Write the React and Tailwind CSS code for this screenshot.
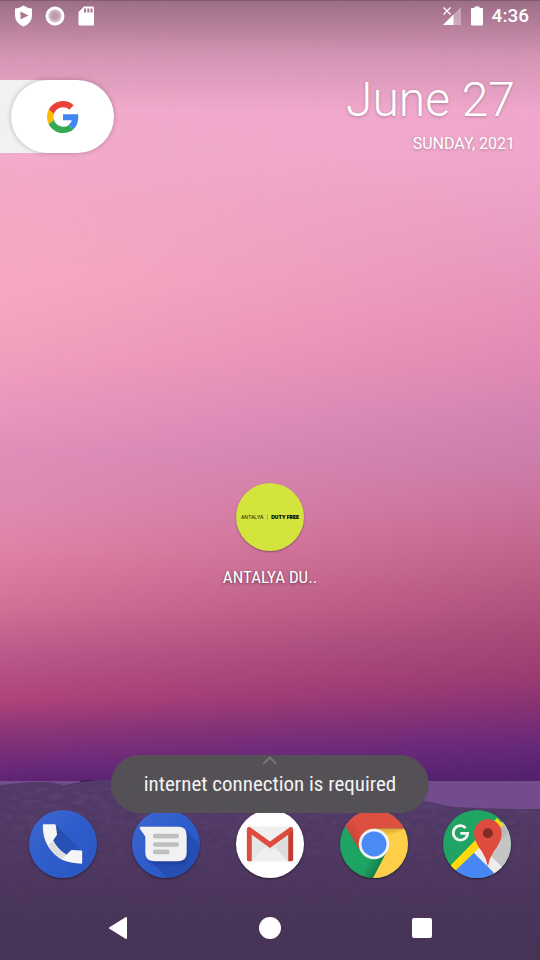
import React from "react";

function Wallpaper() {
  return (
    <div aria-hidden="true" className="absolute inset-0 -z-10 overflow-hidden bg-[#4c3560]">
      <div className="absolute inset-0 bg-[linear-gradient(to_bottom,#f0a8ce_0%,#f0a7cc_16%,#ea9cc2_25%,#e890b9_33%,#e089b3_38.500%,#d484b2_43%,#cd7daa_48%,#ca719b_53%,#bd6089_59%,#a94b79_65.500%,#9a3c70_70.500%,#8b3374_73%,#65287a_78%,#52216d_81.300%,#52216d_100%)]" />
      <div className="absolute inset-0 bg-[linear-gradient(to_bottom,#f0a8ce_0%,#f1abcb_16%,#f4a8c4_21%,#f8a9c1_29%,#f29fbd_37%,#e995be_43%,#df8eb8_47.500%,#df8ab2_53%,#df82a6_57.500%,#d07096_63.500%,#b95a8a_68%,#b04479_72.800%,#8d3678_76%,#66287a_80.400%,#5f2372_81.300%,#5f2372_100%)] [mask-image:linear-gradient(to_right,black,transparent)]" />
      <svg className="absolute inset-x-0 bottom-0 h-[180px] w-full" viewBox="0 0 540 180" preserveAspectRatio="none">
        <defs>
          <linearGradient id="hill" x1="0" y1="0" x2="0" y2="1">
            <stop offset="0" stopColor="#533a6a" />
            <stop offset="0.45" stopColor="#4e3761" />
            <stop offset="1" stopColor="#463355" />
          </linearGradient>
          <filter id="grain" x="0" y="0" width="100%" height="100%">
            <feTurbulence type="fractalNoise" baseFrequency="0.08 0.2" numOctaves="3" seed="4" />
            <feColorMatrix values="0 0 0 0 0.7  0 0 0 0 0.5  0 0 0 0 0.8  0.3 0 0 0 -0.12" />
          </filter>
          <linearGradient id="fade" x1="0" y1="0" x2="0" y2="1">
            <stop offset="0" stopColor="white" stopOpacity="0.6" />
            <stop offset="0.6" stopColor="white" stopOpacity="0.1" />
            <stop offset="1" stopColor="white" stopOpacity="0" />
          </linearGradient>
          <mask id="grainMask"><path d="M0 8H300L430 24L540 31V180H0z" fill="url(#fade)" /></mask>
        </defs>
        <path d="M0 1H540V40H0z" fill="#724c8c" />
        <path d="M80 1L112-2H150V6H80z" fill="#321250" />
        <path d="M0 5L30 2H50L64 5L80 2L125-3L180-10L220-4L300 8L400 18L430 22L453 27L510 29H540V180H0z" fill="url(#hill)" />
        <g mask="url(#grainMask)"><rect y="8" width="540" height="172" filter="url(#grain)" /></g>
      </svg>
      <div className="absolute inset-x-0 top-0 h-28 bg-linear-to-b from-black/35 via-black/12 to-transparent" />
      <div className="absolute inset-x-0 top-0 h-px bg-black/15" />
    </div>
  );
}

function StatusBar() {
  return (
    <header className="flex h-8 items-center justify-between pr-[11px] pl-[14px] text-white">
      <div className="flex items-center gap-3">
        <svg width="19" height="22" viewBox="0 0 19 22" aria-label="Play Protect">
          <path fillRule="evenodd" fill="currentColor" d="M9.500 0.500Q13 3 18 3.500V10.500Q18 18 9.500 21.500Q1 18 1 10.500V3.500Q6 3 9.500 0.500zM6.500 6.500V14.500L14.500 10.500z" />
        </svg>
        <svg width="20" height="20" viewBox="0 0 20 20" aria-label="Sync">
          <circle cx="10" cy="10" r="8" fill="currentColor" fillOpacity="0.45" stroke="currentColor" strokeWidth="3" />
          <circle cx="10" cy="10" r="4" fill="#bd90a8" fillOpacity="0.7" />
        </svg>
        <svg width="19" height="20" viewBox="0 0 19 20" aria-label="SD card">
          <path fillRule="evenodd" fill="currentColor" d="M7 0.500H15.500Q17 0.500 17 2V18Q17 19.500 15.500 19.500H3Q1.500 19.500 1.500 18V6zM7 2.500V6.500H9V2.500zM10.300 2.500V6.500H12.300V2.500zM13.500 2.500V6.500H15.500V2.500z" />
        </svg>
      </div>
      <div className="flex items-center gap-[7px]">
        <svg width="20" height="20" viewBox="0 0 20 20" aria-label="No mobile signal">
          <path d="M19 1V19H1z" fill="currentColor" fillOpacity="0.35" />
          <path d="M11.500 8.500V19H1z" fill="currentColor" />
          <path d="M1.500 1.500L8.500 8.500M8.500 1.500L1.500 8.500" stroke="currentColor" strokeWidth="1.300" />
        </svg>
        <svg width="16" height="20" viewBox="0 0 16 20" aria-label="Battery full">
          <path fill="currentColor" d="M5.500 0.500H10.500V2H13Q14 2 14 3V18.500Q14 19.500 13 19.500H3Q2 19.500 2 18.500V3Q2 2 3 2H5.500z" />
        </svg>
        <time className="text-[19px] leading-5 font-medium">4:36</time>
      </div>
    </header>
  );
}

function GoogleLogo() {
  return (
    <svg width="32" height="32" viewBox="0 0 48 48" aria-hidden="true">
      <path fill="#EA4335" d="M24 9.500c3.540 0 6.710 1.220 9.210 3.600l6.850-6.850C35.900 2.380 30.470 0 24 0 14.620 0 6.510 5.380 2.560 13.220l7.980 6.190C12.430 13.720 17.740 9.500 24 9.500z" />
      <path fill="#4285F4" d="M46.980 24.550c0-1.570-.15-3.090-.38-4.550H24v9.020h12.940c-.58 2.960-2.260 5.480-4.780 7.180l7.730 6c4.510-4.180 7.090-10.360 7.090-17.650z" />
      <path fill="#FBBC05" d="M10.530 28.590c-.48-1.450-.76-2.990-.76-4.590s.27-3.140.76-4.590l-7.980-6.190C.92 16.460 0 20.120 0 24c0 3.880.92 7.540 2.560 10.780l7.970-6.190z" />
      <path fill="#34A853" d="M24 48c6.480 0 11.930-2.130 15.890-5.810l-7.730-6c-2.150 1.450-4.920 2.300-8.160 2.300-6.260 0-11.570-4.220-13.470-9.910l-7.980 6.190C6.510 42.620 14.620 48 24 48z" />
    </svg>
  );
}

function PhoneIcon() {
  return (
    <svg className="size-full" viewBox="0 0 69 69" aria-hidden="true">
      <defs>
        <linearGradient id="blue" x1="0" y1="0" x2="1" y2="1">
          <stop offset="0" stopColor="#3f68cf" />
          <stop offset="0.500" stopColor="#2e5ccb" />
          <stop offset="1" stopColor="#2a57c0" />
        </linearGradient>
        <linearGradient id="shade" gradientUnits="userSpaceOnUse" x1="24" y1="24" x2="56" y2="56">
          <stop offset="0" stopColor="#14296b" stopOpacity="0.35" />
          <stop offset="1" stopColor="#14296b" stopOpacity="0.02" />
        </linearGradient>
        <clipPath id="disc"><circle cx="34.500" cy="34.500" r="34.500" /></clipPath>
      </defs>
      <g clipPath="url(#disc)">
        <rect width="69" height="69" fill="url(#blue)" />
        <path d="M28 16L68 56L56 70L33 49L24 31z" fill="url(#shade)" />
        <path d="M15 14.500H26Q27 14.500 27.200 15.500L28.500 25L24.500 31Q29 40 38 45.500L43 40.500L53 41.200Q54 41.300 54 42.300V53.500Q54 54.500 53 54.500C40 54 32 51 26 45C17 36 14 27 14 15.500Q14 14.500 15 14.500z" fill="#f5f5f5" />
        <path d="M19.500 35L24.500 31Q29 40 38 45.500L33.500 49.800Q29.500 48 26 45Q21.500 40.500 19.500 35z" fill="#dedede" />
      </g>
    </svg>
  );
}

function MessagesIcon() {
  return (
    <svg className="size-full" viewBox="0 0 69 69" aria-hidden="true">
      <defs>
        <filter id="soft" x="-30%" y="-30%" width="160%" height="170%"><feGaussianBlur stdDeviation="2" /></filter>
      </defs>
      <g clipPath="url(#disc)">
        <rect width="69" height="69" fill="url(#blue)" />
        <path d="M54 20L80 46V90H57L15 48z" fill="#14307d" fillOpacity="0.26" />
        <path d="M16 22H54V53H18z" fill="#0f2459" fillOpacity="0.5" filter="url(#soft)" />
        <path d="M8.500 17H47Q55.500 17 55.500 25.500V43.500Q55.500 52 47 52H22Q13.500 52 13.500 43.500V27L8 19Q7.500 17 8.500 17z" fill="#f1f1f1" />
        <path d="M23.500 26.500H45.500M23.500 35H45.500M23.500 42.500H36" stroke="#bfbfbf" strokeWidth="4.600" strokeLinecap="round" />
      </g>
    </svg>
  );
}

function GmailIcon() {
  return (
    <svg className="size-full" viewBox="0 0 69 69" aria-hidden="true">
      <circle cx="34.500" cy="34.500" r="34.500" fill="#fff" />
      <path d="M12 17H57V52H12z" fill="#e6e6e6" />
      <path d="M14 17H55L34.500 34z" fill="#f0f0f0" />
      <path d="M16 52L31 36L34.500 39L38 36L53 52z" fill="#efefef" />
      <path d="M16 26L34.500 42L53 26V52L38 37L34.500 41z" fill="#d8d8d8" fillOpacity="0.7" />
      <path d="M11 20L16 24V52H13Q11 52 11 50z" fill="#dc4c3f" />
      <path d="M58 20L53 24V52H56Q58 52 58 50z" fill="#c63a2e" />
      <path d="M11 20Q11 17 14 17.300L34.500 32L55 17.300Q58 17 58 20Q58 21.500 56.500 22.500L34.500 38.500L12.500 22.500Q11 21.500 11 20z" fill="#dd4b3e" />
    </svg>
  );
}

function ChromeIcon() {
  return (
    <svg className="size-full" viewBox="0 0 69 69" aria-hidden="true">
      <defs>
        <linearGradient id="redShade" gradientUnits="userSpaceOnUse" x1="10" y1="31" x2="22" y2="24">
          <stop offset="0" stopColor="#942c22" stopOpacity="0.35" />
          <stop offset="1" stopColor="#942c22" stopOpacity="0" />
        </linearGradient>
        <linearGradient id="yellowShade" x1="0" y1="0" x2="0" y2="1">
          <stop offset="0" stopColor="#a8751a" stopOpacity="0.4" />
          <stop offset="1" stopColor="#a8751a" stopOpacity="0" />
        </linearGradient>
        <linearGradient id="greenShade" gradientUnits="userSpaceOnUse" x1="40" y1="57" x2="30" y2="51">
          <stop offset="0" stopColor="#0a4f2c" stopOpacity="0.45" />
          <stop offset="1" stopColor="#0a4f2c" stopOpacity="0" />
        </linearGradient>
      </defs>
      <g clipPath="url(#disc)">
        <rect width="69" height="69" fill="#1da362" />
        <path d="M6 17L-4-4H74V19H34.500L20 41z" fill="#dc4f41" />
        <path d="M6 17L20 41L29 21L20 4z" fill="url(#redShade)" />
        <path d="M34.500 19H74V74H31L47.500 42z" fill="#ffce48" />
        <path d="M34.500 19H66L46 27z" fill="url(#yellowShade)" />
        <path d="M47.500 42L32.500 70H18L28 48z" fill="url(#greenShade)" />
        <circle cx="34.500" cy="34.500" r="15.500" fill="#f4f4f4" />
        <circle cx="34.500" cy="34.500" r="12.700" fill="#4a8af4" />
      </g>
    </svg>
  );
}

function MapsIcon() {
  return (
    <svg className="size-full" viewBox="0 0 69 69" aria-hidden="true">
      <g clipPath="url(#disc)">
        <rect width="69" height="69" fill="#1fa463" />
        <path d="M60 12L80 10V80H58L33 40z" fill="#c5c5c5" />
        <path d="M44 48L66 22L60 14L40 34z" fill="#b0b0b0" fillOpacity="0.5" />
        <path d="M30 44L38 36L63 61L54 70z" fill="#ececec" />
        <path d="M31 43L58 70H4z" fill="#4787f3" />
        <path d="M3 61L55 8L61 15L9 65z" fill="#ffd90b" />
        <path d="M45.500 57Q44 49 39.500 42Q31.500 32 31.500 23.500A14 14 0 0 1 59.500 23.500Q59.500 32 51.500 42Q47 49 45.500 57z" fill="#df4b3f" />
        <circle cx="45.500" cy="23.500" r="5" fill="#7d2b24" />
        <path d="M23 18.200A7.300 7.300 0 1 0 25 23.800H17.500" fill="none" stroke="#f3f3f3" strokeWidth="2.800" />
      </g>
    </svg>
  );
}

const dockApps = [
  { name: "Phone", Icon: PhoneIcon },
  { name: "Messages", Icon: MessagesIcon },
  { name: "Gmail", Icon: GmailIcon },
  { name: "Chrome", Icon: ChromeIcon },
  { name: "Maps", Icon: MapsIcon },
];

export default function App() {
  return (
    <main className="relative isolate flex min-h-screen flex-col font-[Roboto,sans-serif] text-white">
      <Wallpaper />
      <StatusBar />

      <section className="flex items-start justify-between pt-12 pr-[25px]">
        <div className="flex w-[78px] bg-[#f1f1f1] pl-[11px]">
          <button type="button" aria-label="Google search" className="flex h-[73px] w-[103px] shrink-0 items-center justify-center rounded-full bg-white shadow-[0_0_5px_rgba(0,0,0,0.25)]">
            <GoogleLogo />
          </button>
        </div>
        <div className="flex flex-col items-end [text-shadow:0_1px_3px_rgba(0,0,0,0.25)]">
          <p className="text-5xl leading-10 font-light">June 27</p>
          <p className="mt-[14px] text-base leading-5">SUNDAY, 2021</p>
        </div>
      </section>

      <section className="flex flex-1 flex-col items-center justify-end pb-[223px]">
        <button type="button" className="flex flex-col items-center gap-4">
          <span className="flex size-[68px] items-center justify-center gap-[3px] rounded-full bg-[#d3e43c] font-[Inter,sans-serif] text-[5px] leading-none whitespace-nowrap text-[#20240c] shadow-[0_1px_2px_rgba(0,0,0,0.35)]">
            <span>ANTALYA</span>
            <span className="text-[#5c8a6a]">|</span>
            <span className="font-black text-black">DUTY FREE</span>
          </span>
          <span className="font-['Roboto_Condensed',Roboto,sans-serif] text-[17px] leading-5 [text-shadow:0_1px_3px_rgba(0,0,0,0.5)]">ANTALYA DU..</span>
        </button>
      </section>

      <section aria-label="Favorite apps" className="grid grid-cols-5 justify-items-center px-[11px]">
        {dockApps.map(({ name, Icon }) => (
          <button key={name} type="button" aria-label={name} className="size-[68px] rounded-full shadow-[0_1px_2px_rgba(0,0,0,0.5)]">
            <Icon />
          </button>
        ))}
      </section>

      <nav aria-label="System navigation" className="grid grid-cols-3 items-center justify-items-center px-[42px] pt-[38px] pb-5">
        <button type="button" aria-label="Back">
          <svg width="20" height="24" viewBox="0 0 20 24"><path d="M18 2V22L2 12z" fill="currentColor" stroke="currentColor" strokeWidth="2" strokeLinejoin="round" /></svg>
        </button>
        <button type="button" aria-label="Home" className="size-[22px] rounded-full bg-white" />
        <button type="button" aria-label="Recent apps" className="size-5 rounded-xs bg-white" />
      </nav>

      <div role="status" className="absolute bottom-[147px] left-1/2 flex h-[58px] -translate-x-1/2 items-center rounded-full bg-[#555256]/98 px-[33px] whitespace-nowrap">
        <svg className="absolute top-0 left-1/2 -translate-x-1/2" width="20" height="12" viewBox="0 0 20 12" aria-hidden="true">
          <path d="M3.500 9L10 2.500L16.500 9" fill="none" stroke="#777477" strokeWidth="2" />
        </svg>
        <p className="font-['Roboto_Condensed',Roboto,sans-serif] text-[21px] leading-6 text-[#f3f3f3]">internet connection is required</p>
      </div>
    </main>
  );
}
